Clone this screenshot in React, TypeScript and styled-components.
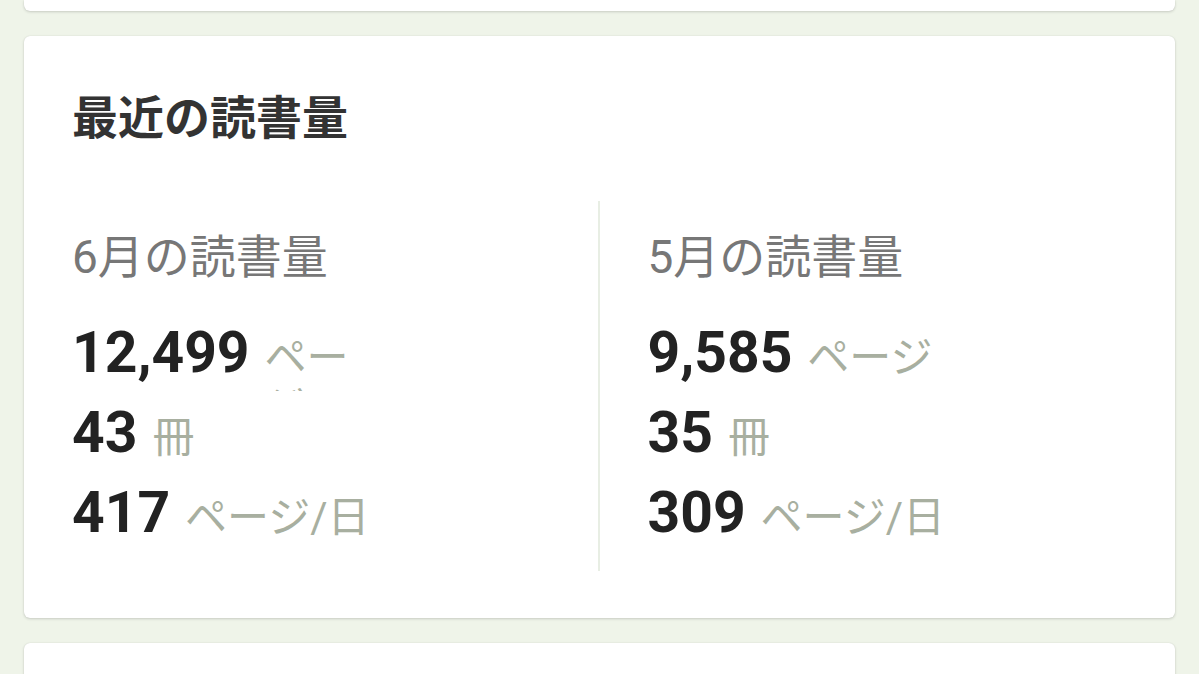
import React from "react";
import styled, { createGlobalStyle } from "styled-components";

const Global = createGlobalStyle`
  html, body {
    margin: 0;
    padding: 0;
    background: #eff4e9;
  }
  body {
    font-family: Roboto, "Noto Sans CJK JP", sans-serif;
    overflow: hidden;
  }
`;

const Page = styled.div`
  display: flex;
  flex-direction: column;
  gap: 25px;
  padding: 0 24px;
  width: 1199px;
  height: 674px;
  box-sizing: border-box;
  overflow: hidden;
`;

const Card = styled.section<{ $stub?: boolean }>`
  background: #ffffff;
  border-radius: ${(p) => (p.$stub ? "0 0 6px 6px" : "6px")};
  box-shadow: 0 1px 3px rgba(0, 0, 0, 0.16), 0 0 1px rgba(0, 0, 0, 0.12);
  flex-shrink: 0;
  ${(p) => (p.$stub ? "height: 11px;" : "")}
`;

const MainCard = styled(Card)`
  padding: 46px 0 47px;
`;

const NextCard = styled(Card)`
  height: 120px;
`;

const Title = styled.h2`
  margin: 0;
  padding: 0 48px;
  font-family: "Noto Sans CJK JP", sans-serif;
  font-weight: 700;
  font-size: 46px;
  line-height: 64px;
  color: #333333;
`;

const Columns = styled.div`
  display: grid;
  grid-template-columns: 1fr 1fr;
  margin-top: 55px;
`;

const Column = styled.div<{ $divided?: boolean }>`
  padding: 26px 48px 20px;
  border-left: ${(p) => (p.$divided ? "2px solid #e8eee4" : "none")};
  margin-left: ${(p) => (p.$divided ? "-2px" : "0")};
`;

const Heading = styled.h3`
  margin: 0;
  font-family: Roboto, "Noto Sans CJK JP", sans-serif;
  font-weight: 400;
  font-size: 46px;
  line-height: 60px;
  color: #777777;
`;

const Stats = styled.div`
  width: 300px;
  margin-top: 28px;
  display: flex;
  flex-direction: column;
  gap: 4px;
`;

const Row = styled.div`
  display: flex;
  align-items: baseline;
  gap: 15px;
  height: 76px;
  overflow: hidden;
`;

const Value = styled.span`
  flex-shrink: 0;
  font-family: Roboto, sans-serif;
  font-weight: 700;
  font-size: 57px;
  line-height: 76px;
  color: #222222;
`;

const Unit = styled.span`
  min-width: 0;
  font-family: Roboto, "Noto Sans CJK JP", sans-serif;
  font-size: 42px;
  line-height: 49px;
  color: #a8afa0;
`;

type Stat = { value: string; unit: string };
type Month = { label: string; stats: Stat[] };

const months: Month[] = [
  {
    label: "6月の読書量",
    stats: [
      { value: "12,499", unit: "ページ" },
      { value: "43", unit: "冊" },
      { value: "417", unit: "ページ/日" },
    ],
  },
  {
    label: "5月の読書量",
    stats: [
      { value: "9,585", unit: "ページ" },
      { value: "35", unit: "冊" },
      { value: "309", unit: "ページ/日" },
    ],
  },
];

export default function App() {
  return (
    <>
      <Global />
      <Page>
        <Card $stub />
        <MainCard>
          <Title>最近の読書量</Title>
          <Columns>
            {months.map((m, i) => (
              <Column key={m.label} $divided={i > 0}>
                <Heading>{m.label}</Heading>
                <Stats>
                  {m.stats.map((s) => (
                    <Row key={s.unit}>
                      <Value>{s.value}</Value>
                      <Unit>{s.unit}</Unit>
                    </Row>
                  ))}
                </Stats>
              </Column>
            ))}
          </Columns>
        </MainCard>
        <NextCard />
      </Page>
    </>
  );
}
